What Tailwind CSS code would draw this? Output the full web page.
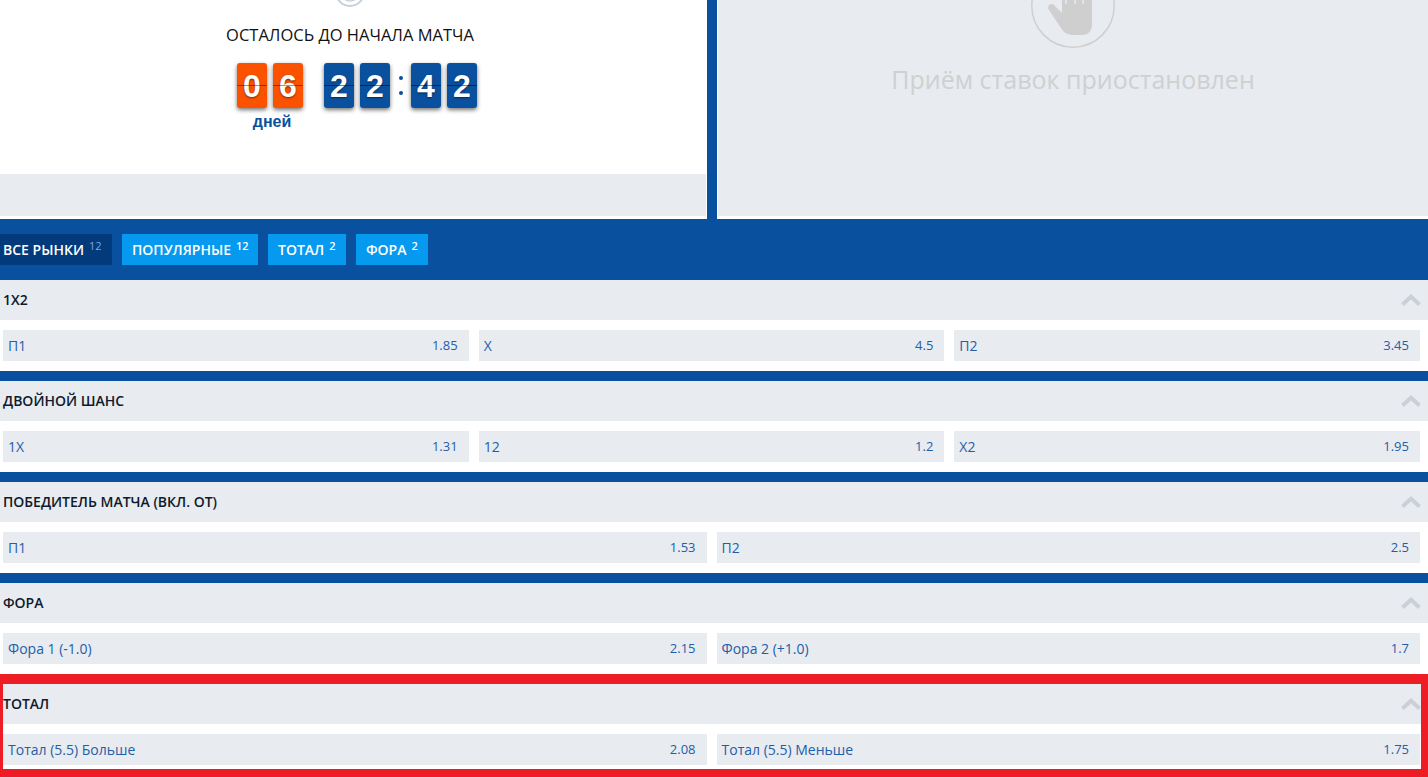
<!DOCTYPE html>
<html lang="ru">
<head>
  <meta charset="UTF-8" />
  <meta name="viewport" content="width=device-width, initial-scale=1.0" />
  <title>Рынки</title>
  <script src="https://cdn.jsdelivr.net/npm/@tailwindcss/browser@4"></script>
</head>
<body class="bg-white font-['Open_Sans',sans-serif] text-[#0f1a2a]">
  <div class="relative w-[1428px] h-[777px] overflow-hidden">

    <!-- top panels -->
    <div class="flex h-[219px] bg-[#09519e]">
      <div class="w-[707px] bg-white pb-[3px] flex flex-col">
        <div class="flex-1 flex flex-col items-center pr-[7px]">
          <svg class="-mt-[23px] w-[30px] h-[30px]" viewBox="0 0 30 30" fill="none" stroke="#c5d0dc" stroke-width="2"><circle cx="15" cy="15" r="14"/><circle cx="15" cy="15" r="9" stroke-width="1.5"/></svg>
          <div class="mt-[17px] text-[16.5px] leading-[22px] text-[#111]">ОСТАЛОСЬ ДО НАЧАЛА МАТЧА</div>
          <div class="mt-[17px] ml-[14px] flex items-start font-['Liberation_Sans',sans-serif]">
            <div class="flex flex-col items-center">
              <div class="flex gap-[6px]">
                <div class="relative w-[30px] h-[45px] rounded-[3px] bg-[#fb5200] shadow-[0_2px_4px_rgba(0,0,0,0.55)] flex items-center justify-center text-white font-bold text-[32px] [text-shadow:0_1px_2px_rgba(0,0,0,0.5)]">0<span class="absolute left-0 right-0 top-[22px] h-px bg-black/40"></span></div>
                <div class="relative w-[30px] h-[45px] rounded-[3px] bg-[#fb5200] shadow-[0_2px_4px_rgba(0,0,0,0.55)] flex items-center justify-center text-white font-bold text-[32px] [text-shadow:0_1px_2px_rgba(0,0,0,0.5)]">6<span class="absolute left-0 right-0 top-[22px] h-px bg-black/40"></span></div>
              </div>
              <div class="mt-[5px] pl-[4px] text-[16px] leading-[18px] font-bold text-[#09519e]">дней</div>
            </div>
            <div class="ml-[21px] flex gap-[6px]">
              <div class="relative w-[30px] h-[45px] rounded-[3px] bg-[#09519e] shadow-[0_2px_4px_rgba(0,0,0,0.55)] flex items-center justify-center text-white font-bold text-[32px] [text-shadow:0_1px_2px_rgba(0,0,0,0.5)]">2<span class="absolute left-0 right-0 top-[22px] h-px bg-black/50"></span></div>
              <div class="relative w-[30px] h-[45px] rounded-[3px] bg-[#09519e] shadow-[0_2px_4px_rgba(0,0,0,0.55)] flex items-center justify-center text-white font-bold text-[32px] [text-shadow:0_1px_2px_rgba(0,0,0,0.5)]">2<span class="absolute left-0 right-0 top-[22px] h-px bg-black/50"></span></div>
            </div>
            <div class="w-[21px] h-[45px] flex flex-col items-center justify-center gap-[11px]">
              <span class="w-[4px] h-[4px] rounded-full bg-[#09519e]"></span>
              <span class="w-[4px] h-[4px] rounded-full bg-[#09519e]"></span>
            </div>
            <div class="flex gap-[6px]">
              <div class="relative w-[30px] h-[45px] rounded-[3px] bg-[#09519e] shadow-[0_2px_4px_rgba(0,0,0,0.55)] flex items-center justify-center text-white font-bold text-[32px] [text-shadow:0_1px_2px_rgba(0,0,0,0.5)]">4<span class="absolute left-0 right-0 top-[22px] h-px bg-black/50"></span></div>
              <div class="relative w-[30px] h-[45px] rounded-[3px] bg-[#09519e] shadow-[0_2px_4px_rgba(0,0,0,0.55)] flex items-center justify-center text-white font-bold text-[32px] [text-shadow:0_1px_2px_rgba(0,0,0,0.5)]">2<span class="absolute left-0 right-0 top-[22px] h-px bg-black/50"></span></div>
            </div>
          </div>
        </div>
        <div class="h-[42px] mr-px bg-[#e8ebf0]"></div>
      </div>
      <div class="w-[10px]"></div>
      <div class="flex-1 bg-white pl-px pb-[3px]">
        <div class="h-full bg-[#e8ebf0] flex flex-col items-center overflow-hidden">
          <svg class="-mt-[36px] shrink-0 w-[84px] h-[84px]" viewBox="0 0 84 84">
            <circle cx="42" cy="42" r="41.2" fill="none" stroke="#cfcfcf" stroke-width="1.5"/>
            <path d="M31 20 L31 49 L23 41 C20 38 15 42 18 46 L30 64 C33 69 37 71 43 71 L51 71 C57 71 61 67 61 61 L61 20 L52.7 20 L52.7 40 L51.3 40 L51.3 20 L44.7 20 L44.7 40 L43.3 40 L43.3 20 L35.7 20 L35.7 40 L34.3 40 L34.3 20 Z" fill="#cfcfcf"/>
          </svg>
          <div class="mt-[15px] text-[25px] leading-[33px] text-[#cfd0d1]">Приём ставок приостановлен</div>
        </div>
      </div>
    </div>

    <!-- market tabs -->
    <div class="flex items-center gap-[10px] h-[61px] bg-[#09519e] text-white text-[14px] font-semibold uppercase">
      <div class="flex items-center h-[31px] w-[112px] pl-[3px] bg-[#023a7b]">Все рынки<sup class="ml-[5px] top-[-4px] text-[11px] font-normal text-[#7fa9dc]">12</sup></div>
      <div class="flex items-center h-[31px] w-[136px] pl-[10px] bg-[#0599f0]">Популярные<sup class="ml-[5px] top-[-4px] text-[11px]">12</sup></div>
      <div class="flex items-center h-[31px] w-[78px] pl-[10px] bg-[#0599f0]">Тотал<sup class="ml-[5px] top-[-4px] text-[11px]">2</sup></div>
      <div class="flex items-center h-[31px] w-[72px] pl-[10px] bg-[#0599f0]">Фора<sup class="ml-[5px] top-[-4px] text-[11px]">2</sup></div>
    </div>

    <!-- markets -->
    <section class="bg-white">
      <div class="flex items-center justify-between h-[40px] pl-[3px] pr-[7px] bg-[#e8ebf0] text-[14px] font-semibold uppercase"><span class="pb-[2px]">1X2</span>
        <svg class="w-[20px] h-[12px]" viewBox="0 0 20 12" fill="none" stroke="#cbd0d8" stroke-width="4"><path d="M1.5 10.5 L10 2.8 L18.5 10.5"/></svg>
      </div>
      <div class="grid grid-cols-3 gap-[10px] py-[10px] pl-[3px] pr-[8px] text-[14px] text-[#1f5ea8]">
        <div class="flex justify-between items-center h-[31px] pl-[5px] pr-[11px] bg-[#e8ebf0]"><span>П1</span><span class="text-[13px]">1.85</span></div>
        <div class="flex justify-between items-center h-[31px] pl-[5px] pr-[11px] bg-[#e8ebf0]"><span>Х</span><span class="text-[13px]">4.5</span></div>
        <div class="flex justify-between items-center h-[31px] pl-[5px] pr-[11px] bg-[#e8ebf0]"><span>П2</span><span class="text-[13px]">3.45</span></div>
      </div>
    </section>
    <div class="h-[10px] bg-[#09519e]"></div>

    <section class="bg-white">
      <div class="flex items-center justify-between h-[40px] pl-[3px] pr-[7px] bg-[#e8ebf0] text-[14px] font-semibold uppercase"><span class="pb-[2px]">Двойной шанс</span>
        <svg class="w-[20px] h-[12px]" viewBox="0 0 20 12" fill="none" stroke="#cbd0d8" stroke-width="4"><path d="M1.5 10.5 L10 2.8 L18.5 10.5"/></svg>
      </div>
      <div class="grid grid-cols-3 gap-[10px] py-[10px] pl-[3px] pr-[8px] text-[14px] text-[#1f5ea8]">
        <div class="flex justify-between items-center h-[31px] pl-[5px] pr-[11px] bg-[#e8ebf0]"><span>1X</span><span class="text-[13px]">1.31</span></div>
        <div class="flex justify-between items-center h-[31px] pl-[5px] pr-[11px] bg-[#e8ebf0]"><span>12</span><span class="text-[13px]">1.2</span></div>
        <div class="flex justify-between items-center h-[31px] pl-[5px] pr-[11px] bg-[#e8ebf0]"><span>X2</span><span class="text-[13px]">1.95</span></div>
      </div>
    </section>
    <div class="h-[10px] bg-[#09519e]"></div>

    <section class="bg-white">
      <div class="flex items-center justify-between h-[40px] pl-[3px] pr-[7px] bg-[#e8ebf0] text-[14px] font-semibold uppercase"><span class="pb-[2px]">Победитель матча (вкл. ОТ)</span>
        <svg class="w-[20px] h-[12px]" viewBox="0 0 20 12" fill="none" stroke="#cbd0d8" stroke-width="4"><path d="M1.5 10.5 L10 2.8 L18.5 10.5"/></svg>
      </div>
      <div class="grid grid-cols-2 gap-[10px] py-[10px] pl-[3px] pr-[8px] text-[14px] text-[#1f5ea8]">
        <div class="flex justify-between items-center h-[31px] pl-[5px] pr-[11px] bg-[#e8ebf0]"><span>П1</span><span class="text-[13px]">1.53</span></div>
        <div class="flex justify-between items-center h-[31px] pl-[5px] pr-[11px] bg-[#e8ebf0]"><span>П2</span><span class="text-[13px]">2.5</span></div>
      </div>
    </section>
    <div class="h-[10px] bg-[#09519e]"></div>

    <section class="bg-white">
      <div class="flex items-center justify-between h-[40px] pl-[3px] pr-[7px] bg-[#e8ebf0] text-[14px] font-semibold uppercase"><span class="pb-[2px]">Фора</span>
        <svg class="w-[20px] h-[12px]" viewBox="0 0 20 12" fill="none" stroke="#cbd0d8" stroke-width="4"><path d="M1.5 10.5 L10 2.8 L18.5 10.5"/></svg>
      </div>
      <div class="grid grid-cols-2 gap-[10px] py-[10px] pl-[3px] pr-[8px] text-[14px] text-[#1f5ea8]">
        <div class="flex justify-between items-center h-[31px] pl-[5px] pr-[11px] bg-[#e8ebf0]"><span>Фора 1 (-1.0)</span><span class="text-[13px]">2.15</span></div>
        <div class="flex justify-between items-center h-[31px] pl-[5px] pr-[11px] bg-[#e8ebf0]"><span>Фора 2 (+1.0)</span><span class="text-[13px]">1.7</span></div>
      </div>
    </section>
    <div class="h-[10px] bg-white"></div>

    <section class="bg-white">
      <div class="flex items-center justify-between h-[40px] pl-[3px] pr-[7px] bg-[#e8ebf0] text-[14px] font-semibold uppercase"><span class="pb-[2px]">Тотал</span>
        <svg class="w-[20px] h-[12px]" viewBox="0 0 20 12" fill="none" stroke="#cbd0d8" stroke-width="4"><path d="M1.5 10.5 L10 2.8 L18.5 10.5"/></svg>
      </div>
      <div class="grid grid-cols-2 gap-[10px] py-[10px] pl-[3px] pr-[8px] text-[14px] text-[#1f5ea8]">
        <div class="flex justify-between items-center h-[31px] pl-[5px] pr-[11px] bg-[#e8ebf0]"><span>Тотал (5.5) Больше</span><span class="text-[13px]">2.08</span></div>
        <div class="flex justify-between items-center h-[31px] pl-[5px] pr-[11px] bg-[#e8ebf0]"><span>Тотал (5.5) Меньше</span><span class="text-[13px]">1.75</span></div>
      </div>
    </section>

    <!-- red highlight drawn over the last market -->
    <div class="absolute left-0 top-[674px] w-[1428px] h-[103px] border-solid border-[#ee1c25] border-t-[10px] border-l-[3px] border-r-[7px] border-b-[8px]"></div>
  </div>
</body>
</html>
